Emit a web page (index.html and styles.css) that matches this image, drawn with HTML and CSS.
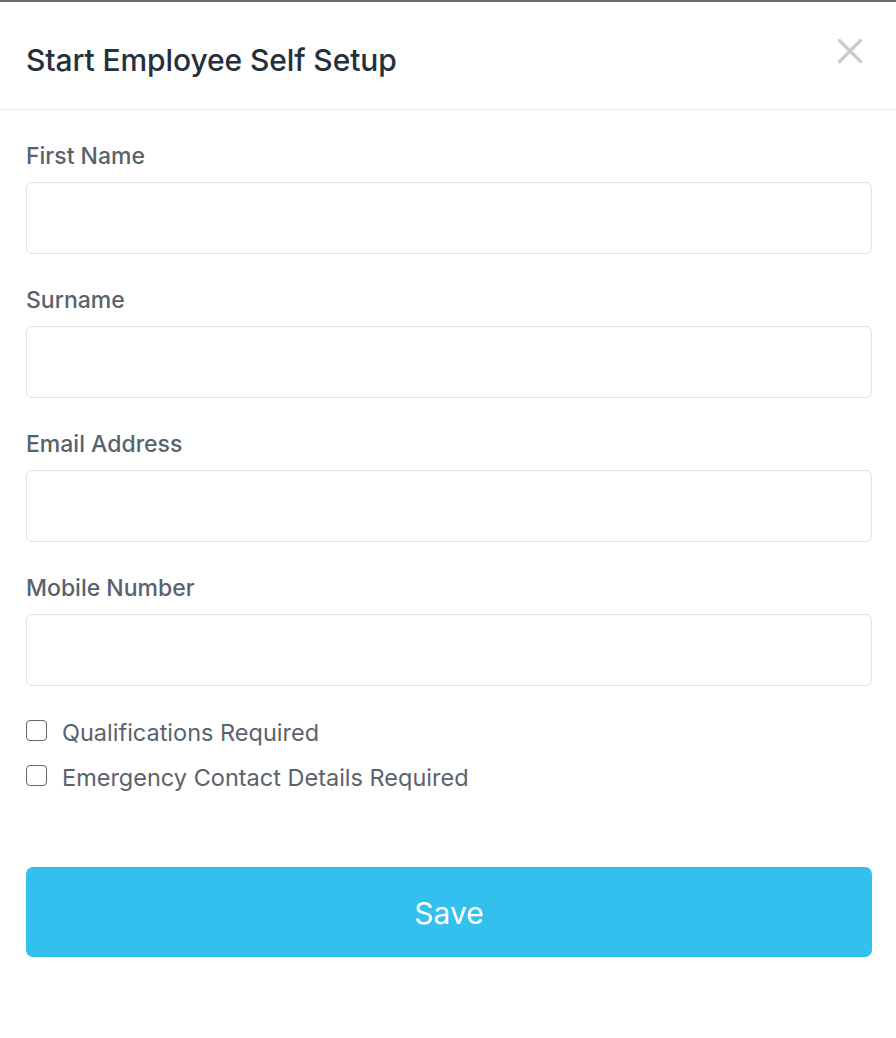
FILE: index.html
```html
<!DOCTYPE html>
<html lang="en">
<head>
<meta charset="utf-8">
<title>Start Employee Self Setup</title>
<link rel="stylesheet" href="styles.css">
</head>
<body>
<div class="modal">
  <header class="modal-header">
    <h1 class="modal-title">Start Employee Self Setup</h1>
    <button class="close" type="button" aria-label="Close">
      <svg width="26" height="26" viewBox="0 0 26 26"><path d="M2.5 2.5 L23.5 23.5 M23.5 2.5 L2.5 23.5" stroke="#cbcbcb" stroke-width="3.2" stroke-linecap="round" fill="none"/></svg>
    </button>
  </header>
  <form class="modal-body">
    <div class="field">
      <label class="label">First Name</label>
      <input class="input" type="text">
    </div>
    <div class="field">
      <label class="label">Surname</label>
      <input class="input" type="text">
    </div>
    <div class="field">
      <label class="label">Email Address</label>
      <input class="input" type="text">
    </div>
    <div class="field">
      <label class="label">Mobile Number</label>
      <input class="input" type="text">
    </div>
    <div class="checks">
      <label class="check"><input type="checkbox" class="box"><span>Qualifications Required</span></label>
      <label class="check"><input type="checkbox" class="box"><span>Emergency Contact Details Required</span></label>
    </div>
    <button class="save" type="button">Save</button>
  </form>
</div>
</body>
</html>
```

FILE: styles.css
```css
* { box-sizing: border-box; }
html, body { margin: 0; padding: 0; background: #fff; }
body {
  font-family: Inter, Lato, sans-serif;
  border-top: 2px solid #6b6b6b;
  height: 1038px;
}
.modal-header {
  height: 108px;
  display: flex;
  align-items: center;
  justify-content: space-between;
  padding: 8px 24px 0 26px;
  border-bottom: 1px solid #e9ecef;
}
.modal-title {
  margin: 0;
  font-size: 30px;
  line-height: 36px;
  font-weight: 500;
  color: #25303b;
  letter-spacing: -0.1px;
}
.close {
  border: 0;
  background: none;
  padding: 0;
  margin: -18px 9px 0 0;
  width: 26px;
  height: 26px;
  display: block;
}
.close svg { display: block; }
.modal-body {
  padding: 32px 24px 0 26px;
}
.field { margin-bottom: 32px; }
.label {
  display: block;
  font-size: 23px;
  line-height: 26px;
  padding-top: 1px;
  font-weight: 500;
  color: #58626c;
  margin-bottom: 13px;
}
.input {
  display: block;
  width: 100%;
  height: 72px;
  border: 1px solid #dde2e6;
  border-radius: 6px;
  background: #fff;
}
.checks {
  margin-top: 0;
  display: flex;
  flex-direction: column;
  gap: 15px;
}
.check {
  display: flex;
  align-items: center;
  gap: 15px;
  font-size: 23.5px;
  line-height: 30px;
  color: #5a636c;
}
.box {
  appearance: none;
  -webkit-appearance: none;
  margin: -6px 0 0 0;
  width: 21px;
  height: 21px;
  border: 1.6px solid #5f6770;
  border-radius: 4px;
  background: #fff;
}
.save {
  display: block;
  width: 100%;
  height: 90px;
  margin-top: 74px;
  border: 0;
  border-radius: 7px;
  background: #33c0ef;
  color: #fff;
  font-family: Inter, Lato, sans-serif;
  font-size: 30px;
  line-height: 36px;
  padding-top: 2px;
  font-weight: 400;
}
```
